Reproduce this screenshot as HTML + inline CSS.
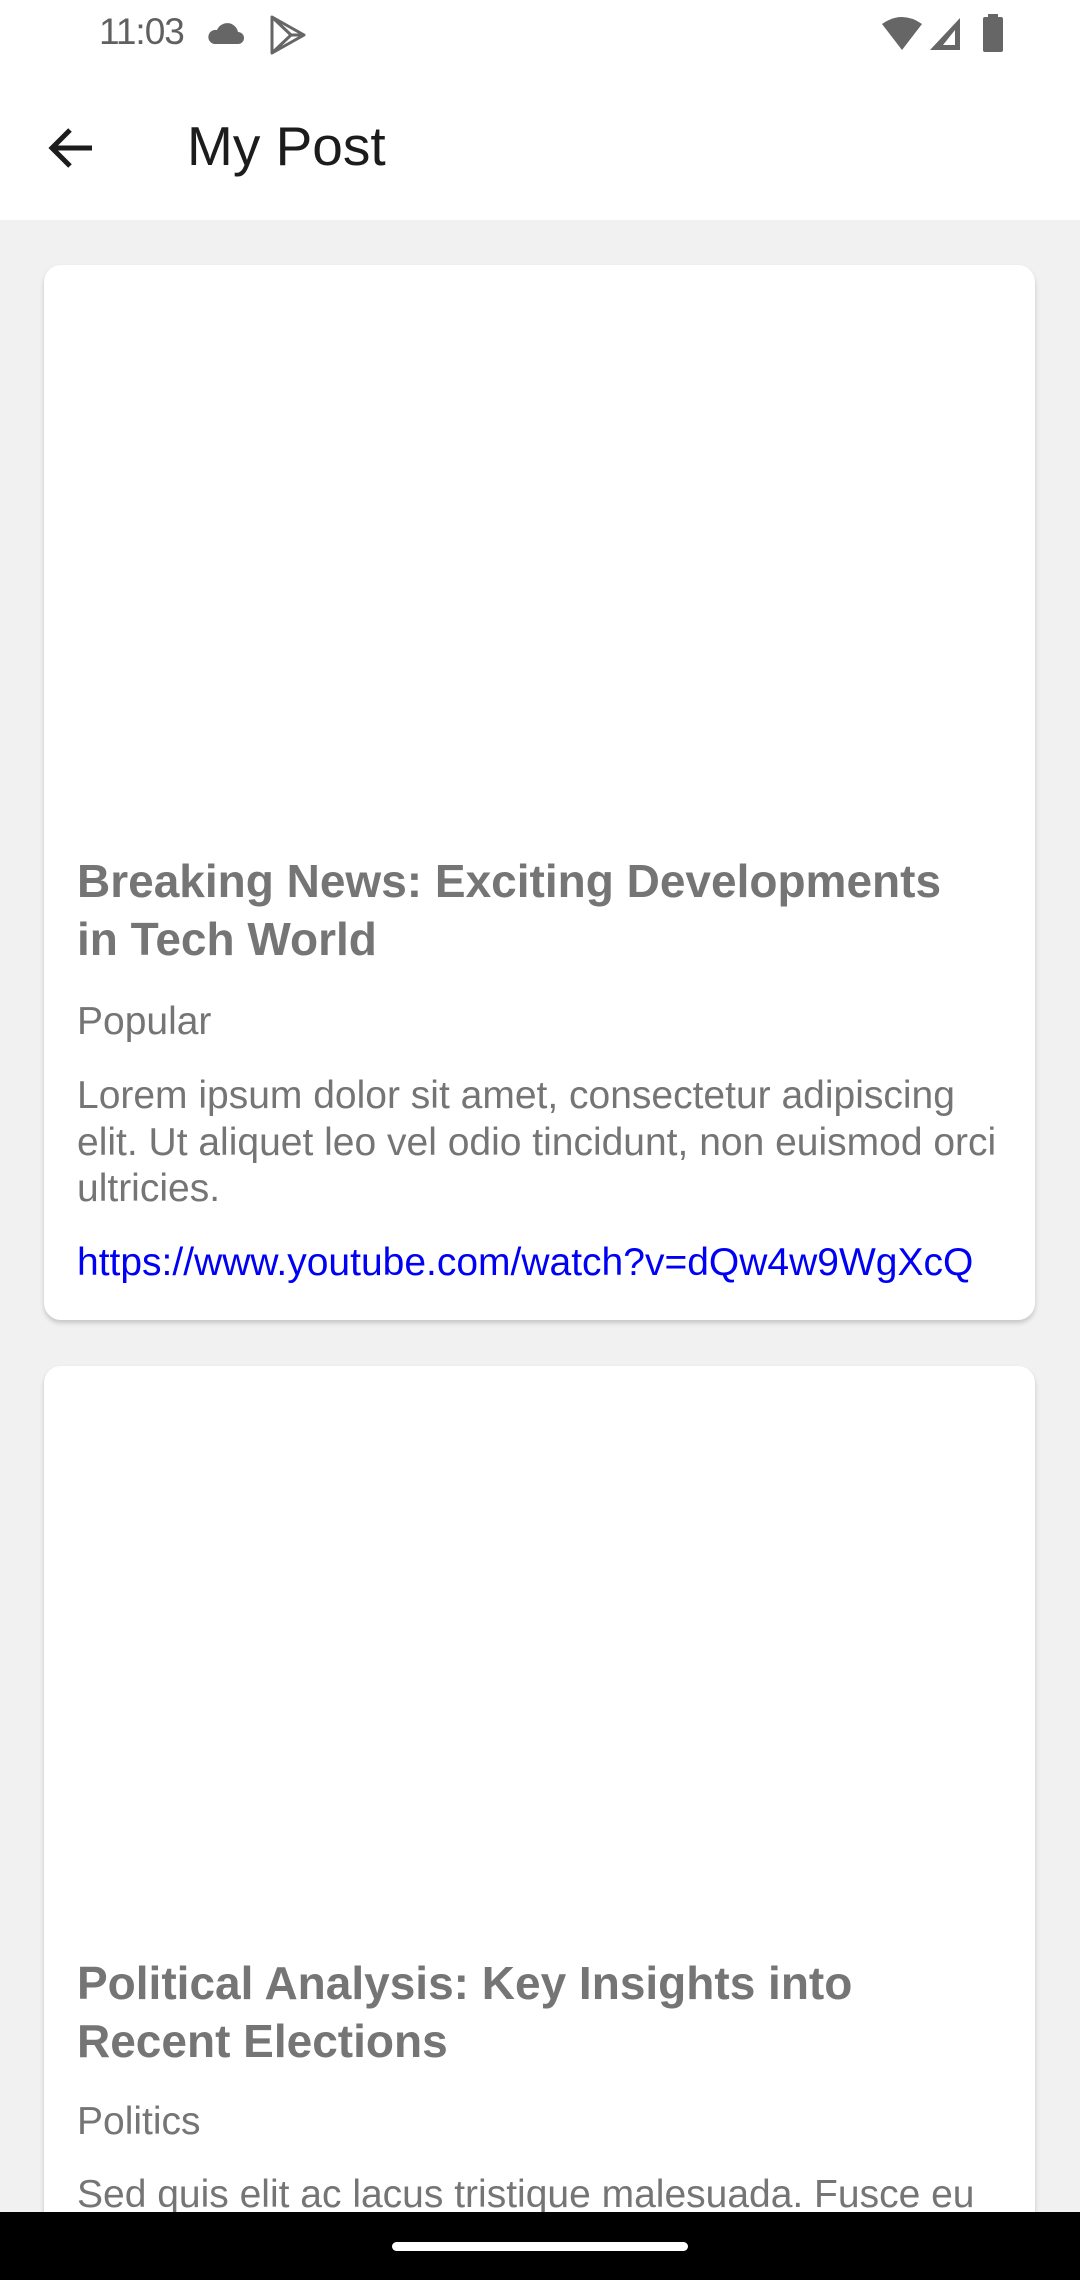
<!DOCTYPE html>
<html><head><meta charset="utf-8">
<style>
*{margin:0;padding:0;box-sizing:border-box}
html,body{width:1080px;height:2280px;overflow:hidden}
body{background:#f1f1f1;font-family:"Liberation Sans",Roboto,sans-serif;position:relative}
.status{position:absolute;left:0;top:0;width:1080px;height:88px;background:#fff}
.time{position:absolute;left:99px;top:11px;font-size:37px;color:#606060;letter-spacing:-1px}
.appbar{position:absolute;left:0;top:88px;width:1080px;height:132px;background:#fff}
.ttl{position:absolute;left:187px;top:26px;font-size:55px;color:#1c1c1c}
.card{position:absolute;left:44px;width:991px;background:#fff;border-radius:17px;box-shadow:0 3px 5px rgba(0,0,0,0.18)}
.t{position:absolute;left:33px;width:900px;font-weight:bold;font-size:46px;line-height:58px;color:#757575}
.c{position:absolute;left:33px;font-size:39px;color:#757575;line-height:46px}
.b{position:absolute;left:33px;width:935px;font-size:39px;line-height:46.5px;color:#757575}
.l{position:absolute;left:33px;font-size:39px;color:#0000f5;line-height:46px;white-space:nowrap}
.nav{position:absolute;left:0;top:2212px;width:1080px;height:68px;background:#000}
.pill{position:absolute;left:392px;top:30px;width:296px;height:9px;border-radius:5px;background:#fff}
</style></head><body>
<div class="status">
<div class="time">11:03</div>
<svg style="position:absolute;left:206px;top:20px" width="38" height="26" viewBox="0 0 38 26"><path d="M8 24h24a6 6 0 0 0 0-12 11 11 0 0 0-21-2 7 7 0 0 0-3 14z" fill="#666"/></svg>
<svg style="position:absolute;left:268px;top:14px" width="42" height="42" viewBox="0 0 42 42"><path d="M4 3l32 18-32 18z M4 3l19 18-19 18 M23 21l13 0" fill="none" stroke="#666" stroke-width="3" stroke-linejoin="round"/></svg>
<svg style="position:absolute;left:880px;top:16px" width="44" height="36" viewBox="0 0 44 36"><path d="M2 8 Q22 -6 42 8 L22 34z" fill="#666"/></svg>
<svg style="position:absolute;left:928px;top:16px" width="34" height="36" viewBox="0 0 34 36"><path d="M32 2V34H2z" fill="#666"/><path d="M27 14V29H15z" fill="#fff"/></svg>
<svg style="position:absolute;left:982px;top:14px" width="22" height="38" viewBox="0 0 22 38"><rect x="6" y="0" width="10" height="4" fill="#666"/><rect x="1" y="3" width="20" height="35" rx="2" fill="#666"/></svg>
</div>
<div class="appbar">
<svg style="position:absolute;left:44px;top:32px" width="56" height="56" viewBox="0 0 56 56"><path d="M48 28H10M26 10L8 28l18 18" fill="none" stroke="#1c1c1c" stroke-width="5"/></svg>
<div class="ttl">My Post</div>
</div>

<div class="card" style="top:265px;height:1055px">
<div class="t" style="top:587px">Breaking News: Exciting Developments in Tech World</div>
<div class="c" style="top:734px">Popular</div>
<div class="b" style="top:808px">Lorem ipsum dolor sit amet, consectetur adipiscing elit. Ut aliquet leo vel odio tincidunt, non euismod orci ultricies.</div>
<div class="l" style="top:975px">https://www.youtube.com/watch?v=dQw4w9WgXcQ</div>
</div>

<div class="card" style="top:1366px;height:900px">
<div class="t" style="top:588px">Political Analysis: Key Insights into Recent Elections</div>
<div class="c" style="top:733px">Politics</div>
<div class="b" style="top:806px">Sed quis elit ac lacus tristique malesuada. Fusce eu</div>
</div>

<div class="nav"><div class="pill"></div></div>
</body></html>
